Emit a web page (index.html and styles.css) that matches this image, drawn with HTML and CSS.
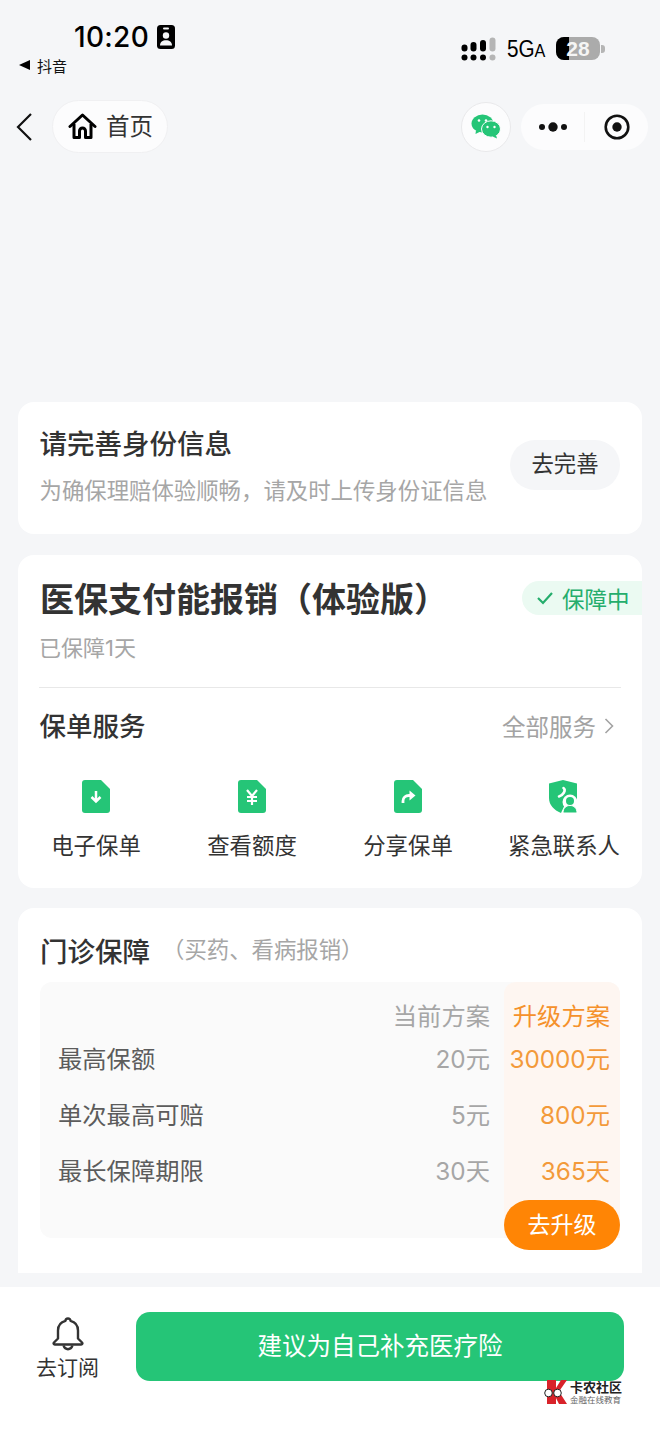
FILE: index.html
```html
<!DOCTYPE html>
<html lang="zh-cmn-Hans">

<head>
    <meta charset="UTF-8">
    <meta name="viewport" content="width=device-width, initial-scale=1.0">
    <title>医保支付能报销</title>
    <link rel="stylesheet" href="styles.css">
</head>

<body>
    <header class="status">
        <div class="status-left">
            <div class="clock">
                <span class="time">10:20</span>
                <svg class="id-icon" width="18" height="24" viewBox="0 0 18 24">
                    <rect width="18" height="24" rx="3.5" fill="#000"/>
                    <rect x="6" y="2.5" width="6" height="2" rx="1" fill="#f5f6f8"/>
                    <circle cx="9" cy="10.5" r="3.2" fill="#f5f6f8"/>
                    <path d="M3 20.5c0-3.6 2.6-5.3 6-5.3s6 1.700 6 5.300z" fill="#f5f6f8"/>
                </svg>
            </div>
            <div class="back-app"><span class="tri"></span>抖音</div>
        </div>
        <div class="status-right">
            <svg class="signal" width="36" height="25" viewBox="0 0 36 25">
                <circle cx="3.500" cy="20.500" r="3"/>
                <circle cx="12.500" cy="20.500" r="3"/>
                <circle cx="22" cy="20.500" r="3"/>
                <circle cx="31.500" cy="20.500" fill="#b5b5b5" r="3"/>
                <rect x="0.500" y="7.500" width="6" height="7" rx="3"/>
                <rect x="9.500" y="5" width="6" height="9.500" rx="3"/>
                <rect x="19" y="3" width="6" height="11.500" rx="3"/>
                <rect x="28.500" y="0.500" width="6" height="14" rx="3" fill="#b5b5b5"/>
            </svg>
            <span class="net">5G<small>A</small></span>
            <div class="battery">
                <span class="battery-fill"></span>
                <span class="battery-num">28</span>
            </div>
            <span class="battery-cap"></span>
        </div>
    </header>

    <nav class="nav">
        <svg class="chevron" width="18" height="30" viewBox="0 0 18 30">
            <path d="M16 2 3 15l13 13" fill="none" stroke="#111" stroke-width="2.200"/>
        </svg>
        <div class="home-pill">
            <svg width="29" height="27" viewBox="0 0 29 27">
                <path d="M2 13.500 14.500 2 27 13.500" fill="none" stroke="#000" stroke-width="3" stroke-linejoin="round" stroke-linecap="round"/>
                <path d="M6 11v13.500h5.500v-6.500a3 3 0 0 1 6 0v6.500H23V11" fill="none" stroke="#000" stroke-width="3" stroke-linejoin="round"/>
            </svg>
            <span class="home-text">首页</span>
        </div>
        <div class="nav-right">
            <div class="wx-btn">
                <svg width="30" height="25" viewBox="0 0 30 25">
                    <ellipse cx="11.500" cy="9.500" rx="11" ry="9" fill="#25c577"/>
                    <path d="M5 16l-.5 4 5-2.500z" fill="#25c577"/>
                    <ellipse cx="20" cy="15" rx="9.500" ry="8.200" fill="#25c577" stroke="#fdfdfd" stroke-width="1"/>
                    <path d="M25 21l1 3.500-4.500-2z" fill="#25c577"/>
                    <circle cx="8" cy="6.500" r="1.300" fill="#fff"/>
                    <circle cx="15" cy="6.500" r="1.300" fill="#fff"/>
                    <circle cx="16.500" cy="13" r="1.200" fill="#fff"/>
                    <circle cx="23.500" cy="13" r="1.200" fill="#fff"/>
                </svg>
            </div>
            <div class="capsule">
                <div class="capsule-cell">
                    <svg width="28" height="10" viewBox="0 0 28 10">
                        <circle cx="3" cy="5" r="3"/>
                        <circle cx="14" cy="5" r="4.700"/>
                        <circle cx="25" cy="5" r="3"/>
                    </svg>
                </div>
                <span class="capsule-line"></span>
                <div class="capsule-cell">
                    <svg width="26" height="26" viewBox="0 0 26 26">
                        <circle cx="13" cy="13" r="11.300" fill="none" stroke="#111" stroke-width="2.600"/>
                        <circle cx="13" cy="13" r="4.700" fill="#111"/>
                    </svg>
                </div>
            </div>
        </div>
    </nav>

    <main class="content">
        <section class="card card-id">
            <div class="id-info">
                <h2 class="id-title">请完善身份信息</h2>
                <p class="id-desc">为确保理赔体验顺畅，请及时上传身份证信息</p>
            </div>
            <div class="btn-complete">去完善</div>
        </section>

        <section class="card card-policy">
            <div class="policy-head">
                <h1 class="policy-title">医保支付能报销（体验版）</h1>
                <div class="badge">
                    <svg width="18" height="14" viewBox="0 0 18 14">
                        <path d="M2 7l5 5 9-10" fill="none" stroke="#25ad6c" stroke-width="2.200"/>
                    </svg>
                    保障中
                </div>
            </div>
            <p class="policy-days">已保障1天</p>
            <div class="service-head">
                <h3 class="service-title">保单服务</h3>
                <div class="service-all">全部服务
                    <svg width="10" height="18" viewBox="0 0 10 18">
                        <path d="M1.500 2l7 7-7 7" fill="none" stroke="#a3a3a3" stroke-width="1.600"/>
                    </svg>
                </div>
            </div>
            <div class="service-grid">
                <div class="service-item">
                    <svg width="28" height="33" viewBox="0 0 28 33">
                        <path d="M3 0h16l9 9v21a3 3 0 0 1-3 3H3a3 3 0 0 1-3-3V3a3 3 0 0 1 3-3z" fill="#25c577"/>
                        <path d="M14 11v10M9.500 17l4.500 4.500 4.500-4.500" fill="none" stroke="#fff" stroke-width="2.500"/>
                    </svg>
                    <span>电子保单</span>
                </div>
                <div class="service-item">
                    <svg width="28" height="33" viewBox="0 0 28 33">
                        <path d="M3 0h16l9 9v21a3 3 0 0 1-3 3H3a3 3 0 0 1-3-3V3a3 3 0 0 1 3-3z" fill="#25c577"/>
                        <path d="M9 10l5 6 5-6M14 16v9M9 17h10M9 21h10" fill="none" stroke="#fff" stroke-width="2.200"/>
                    </svg>
                    <span>查看额度</span>
                </div>
                <div class="service-item">
                    <svg width="28" height="33" viewBox="0 0 28 33">
                        <path d="M3 0h16l9 9v21a3 3 0 0 1-3 3H3a3 3 0 0 1-3-3V3a3 3 0 0 1 3-3z" fill="#25c577"/>
                        <path d="M9 23v-2c0-3.500 2.500-5.500 6-5.500h3" fill="none" stroke="#fff" stroke-width="2.800"/>
                        <path d="M15.500 10.500l6 5-6 5z" fill="#fff"/>
                    </svg>
                    <span>分享保单</span>
                </div>
                <div class="service-item">
                    <svg width="30" height="33" viewBox="0 0 30 33">
                        <path d="M14 0l14 3.500V20H18l-6 13C5 30 0 25 0 18V3.500z" fill="#25c577"/>
                        <path d="M14.500 8c1.500 1 1.500 2.500.5 4.500-1.500 2.500-3 3.500-5 4" fill="none" stroke="#fff" stroke-width="2.600" stroke-linecap="round"/>
                        <circle cx="21" cy="22" r="7.500" fill="#fff"/>
                        <circle cx="21" cy="21" r="4" fill="#25c577"/>
                        <path d="M14 33c0-5 3-7.500 7-7.500s7 2.500 7 7.500z" fill="#25c577" stroke="#fff" stroke-width="1"/>
                    </svg>
                    <span>紧急联系人</span>
                </div>
            </div>
        </section>

        <section class="card card-plan">
            <div class="plan-head">
                <h3 class="plan-title">门诊保障</h3>
                <span class="plan-note">（买药、看病报销）</span>
            </div>
            <div class="plan-table">
                <div class="plan-main">
                    <div class="plan-row plan-row-head"><span></span><span>当前方案</span></div>
                    <div class="plan-row"><span class="plan-label">最高保额</span><span>20元</span></div>
                    <div class="plan-row"><span class="plan-label">单次最高可赔</span><span>5元</span></div>
                    <div class="plan-row"><span class="plan-label">最长保障期限</span><span>30天</span></div>
                </div>
                <div class="plan-up">
                    <div class="plan-row plan-row-head"><span>升级方案</span></div>
                    <div class="plan-row"><span>30000元</span></div>
                    <div class="plan-row"><span>800元</span></div>
                    <div class="plan-row"><span>365天</span></div>
                    <div class="btn-upgrade">去升级</div>
                </div>
            </div>
        </section>
    </main>

    <footer class="footer">
        <div class="subscribe">
            <svg width="32" height="35" viewBox="0 0 32 35">
                <path d="M16 2.500c-1.500 0-2.500 1-2.500 2.300C8.500 6 6 9.500 6 14.500v8L2 26.500c-.8.800-.3 2 .8 2h26.400c1.100 0 1.600-1.200.8-2L26 22.500v-8c0-5-2.500-8.500-7.500-9.700 0-1.300-1-2.300-2.500-2.300z" fill="none" stroke="#333" stroke-width="2.400" stroke-linejoin="round"/>
                <path d="M11.500 29.500c.8 2.500 2.500 3.800 4.500 3.800s3.700-1.300 4.500-3.800" fill="none" stroke="#333" stroke-width="2.400"/>
            </svg>
            <span>去订阅</span>
        </div>
        <div class="btn-main">建议为自己补充医疗险</div>
        <div class="watermark">
            <svg width="25" height="24" viewBox="0 0 25 24">
                <path d="M3 0h9v24H3z" fill="#d8232a"/>
                <path d="M12 8 17 0h6l-8 11.500L23 24h-8l-3-6z" fill="#d8232a"/>
                <circle cx="4.500" cy="13" r="3.800" fill="#fff" stroke="#222" stroke-width="1"/>
                <circle cx="13.500" cy="13" r="3.800" fill="#fff" stroke="#222" stroke-width="1"/>
            </svg>
            <div class="watermark-text">
                <b>卡农社区</b>
                <small>金融在线教育</small>
            </div>
        </div>
    </footer>
</body>

</html>
```

FILE: styles.css
```css
html {
    background-color: #f5f6f8;
}

body {
    margin: 0;
    width: 660px;
    height: 1434px;
    overflow: hidden;
    position: relative;
    color: #333;
    font-family: Inter, "Noto Sans CJK SC", sans-serif;
}

h1, h2, h3, p {
    margin: 0;
}

/* status bar */
.status {
    display: flex;
    justify-content: space-between;
    height: 100px;
}

.status-left {
    padding: 20px 0 0 19px;
}

.clock {
    display: flex;
    align-items: center;
    gap: 8px;
    margin-left: 55px;
    height: 34px;
}

.time {
    font-size: 28px;
    font-weight: 500;
    color: #000;
    letter-spacing: 0.3px;
}

.back-app {
    display: flex;
    align-items: center;
    gap: 7px;
    height: 22px;
    font-size: 15px;
    color: #111;
}

.tri {
    width: 0;
    height: 0;
    border-style: solid;
    border-width: 5px 11px 5px 0;
    border-color: transparent #000 transparent transparent;
}

.status-right {
    display: flex;
    align-items: center;
    height: 25px;
    margin-top: 36px;
    padding-right: 55px;
}

.signal {
    margin: 2px 10px 0 0;
}

.net {
    font-size: 23px;
    font-weight: 500;
    color: #000;
    width: 49px;
    margin-top: 2px;
    font-family: "Liberation Sans", sans-serif;
    transform: scaleX(0.9);
    transform-origin: left;
}

.net small {
    font-size: 18px;
}

.battery {
    position: relative;
    width: 44px;
    height: 23px;
    border-radius: 8px;
    background: #ababab;
    overflow: hidden;
    display: flex;
    align-items: center;
    justify-content: center;
}

.battery-fill {
    position: absolute;
    left: 0;
    top: 0;
    bottom: 0;
    width: 13px;
    background: #000;
}

.battery-num {
    position: relative;
    color: #f5f5f5;
    font-size: 21px;
    font-weight: 700;
    font-family: "Liberation Sans", sans-serif;
}

.battery-cap {
    width: 4px;
    height: 8px;
    margin-left: 1px;
    border-radius: 0 3px 3px 0;
    background: #b5b5b5;
}

/* nav */
.nav {
    display: flex;
    align-items: center;
    height: 53px;
    padding-left: 15px;
    padding-right: 12px;
}

.chevron {
    margin-right: 19px;
}

.home-pill {
    display: flex;
    align-items: center;
    gap: 9px;
    width: 116px;
    height: 53px;
    box-sizing: border-box;
    padding-left: 15px;
    background: #fcfcfd;
    border: 1px solid #f0f0f2;
    border-radius: 27px;
    font-size: 23.500px;
    color: #333;
}

.home-pill svg {
    margin-top: -1px;
}

.home-text {
    margin-top: -3px;
}

.nav-right {
    display: flex;
    align-items: center;
    gap: 10px;
    margin-left: auto;
}

.wx-btn {
    display: flex;
    align-items: center;
    justify-content: center;
    width: 50px;
    height: 50px;
    box-sizing: border-box;
    background: #fcfcfd;
    border: 1px solid #e9e9eb;
    border-radius: 50%;
}

.capsule {
    display: flex;
    align-items: center;
    width: 127px;
    height: 46px;
    background: #fcfcfd;
    border-radius: 23px;
}

.capsule-cell {
    flex: 1;
    display: flex;
    justify-content: center;
}

.capsule-cell svg {
    fill: #111;
}

.capsule-line {
    width: 1px;
    height: 30px;
    background: #f3f3f3;
}

/* cards */
.content {
    display: flex;
    flex-direction: column;
    gap: 21px;
    padding: 249px 18px 0;
}

.card {
    background: #fff;
    border-radius: 16px;
}

.card-id {
    display: flex;
    align-items: center;
    justify-content: space-between;
    height: 132px;
    padding: 0 22px 0 21.500px;
    box-sizing: border-box;
}

.id-info {
    margin-top: -4px;
}

.id-title {
    font-size: 27.500px;
    font-weight: 500;
    line-height: 38px;
    color: #333;
}

.id-desc {
    margin-top: 12px;
    font-size: 22.400px;
    line-height: 32px;
    color: #a6a6a6;
}

.btn-complete {
    width: 110px;
    height: 50px;
    line-height: 48px;
    margin-top: -6px;
    text-align: center;
    background: #f5f6f8;
    border-radius: 25px;
    font-size: 22.400px;
    color: #333;
}

.card-policy {
    height: 333px;
    overflow: hidden;
}

.policy-head {
    display: flex;
    align-items: center;
    justify-content: space-between;
    padding: 22px 0 0 22px;
    height: 46px;
}

.policy-title {
    font-size: 34px;
    font-weight: 700;
    line-height: 46px;
    color: #333;
}

.badge {
    display: flex;
    align-items: center;
    gap: 8px;
    width: 120px;
    height: 34px;
    box-sizing: border-box;
    margin-top: -4px;
    padding-left: 14px;
    background: #ebfaf2;
    border-radius: 17px 0 0 17px;
    font-size: 22.500px;
    color: #25ad6c;
}

.policy-days {
    margin: 9px 21px 0;
    padding-bottom: 23px;
    border-bottom: 1px solid #e8e8e8;
    font-size: 22px;
    line-height: 32px;
    color: #a6a6a6;
}

.service-head {
    display: flex;
    align-items: center;
    justify-content: space-between;
    padding: 19px 28px 0 21.500px;
}

.service-title {
    font-size: 26.500px;
    font-weight: 500;
    line-height: 38px;
    color: #333;
}

.service-all {
    display: flex;
    align-items: center;
    gap: 8px;
    font-size: 23.500px;
    color: #a3a3a3;
}

.service-grid {
    display: grid;
    grid-template-columns: repeat(4, 1fr);
    margin-top: 35px;
}

.service-item {
    display: flex;
    flex-direction: column;
    align-items: center;
    gap: 17px;
    font-size: 22.400px;
    line-height: 32px;
    color: #333;
}

.card-plan {
    height: 365px;
    margin-top: -1px;
    border-radius: 16px 16px 0 0;
}

.plan-head {
    display: flex;
    align-items: center;
    height: 74px;
    padding-left: 22px;
}

.plan-title {
    font-size: 27.500px;
    font-weight: 500;
    color: #333;
    margin-top: 10px;
}

.plan-note {
    font-size: 22.400px;
    color: #a6a6a6;
    margin-top: 6px;
    margin-left: 12px;
}

.plan-table {
    display: flex;
    height: 256px;
    margin: 0 22px;
    border-radius: 12px;
    background: #fafafa;
    font-size: 24.300px;
}

.plan-main {
    flex: 1;
    padding: 0 14px 0 18px;
    color: #a6a6a6;
}

.plan-up {
    width: 116px;
    box-sizing: border-box;
    padding-right: 10px;
    text-align: right;
    border-radius: 12px 12px 0 0;
    background: #fef6f1;
    color: #f39a3a;
}

.plan-row {
    display: flex;
    align-items: center;
    justify-content: space-between;
    height: 56px;
}

.plan-up .plan-row {
    justify-content: flex-end;
}

.plan-row-head {
    height: 47px;
    padding-top: 18px;
    box-sizing: border-box;
}

.plan-up .plan-row-head {
    color: #f5912b;
}

.plan-label {
    color: #5c5c5c;
}

.btn-upgrade {
    width: 116px;
    height: 50px;
    line-height: 50px;
    margin-top: 3px;
    text-align: center;
    background: #ff8505;
    border-radius: 25px;
    color: #fff;
    font-size: 23px;
}

/* footer */
.footer {
    display: flex;
    position: relative;
    align-items: flex-start;
    margin-top: 14px;
    height: 147px;
    background: #fff;
}

.subscribe {
    display: flex;
    flex-direction: column;
    align-items: center;
    width: 135px;
    flex-shrink: 0;
    padding-top: 29px;
    margin-right: 1px;
    font-size: 21px;
    line-height: 30px;
    color: #333;
    gap: 2px;
}

.btn-main {
    width: 488px;
    height: 69px;
    line-height: 69px;
    margin-top: 25px;
    text-align: center;
    background: #25c577;
    border-radius: 14px;
    color: #fff;
    font-size: 24.500px;
}

.watermark {
    position: absolute;
    left: 544px;
    top: 93px;
    display: flex;
    gap: 1px;
}

.watermark-text {
    display: flex;
    flex-direction: column;
    color: #222;
}

.watermark-text b {
    font-size: 13px;
    line-height: 15px;
    white-space: nowrap;
}

.watermark-text small {
    font-size: 8.500px;
    line-height: 10px;
    color: #666;
    white-space: nowrap;
}
```
